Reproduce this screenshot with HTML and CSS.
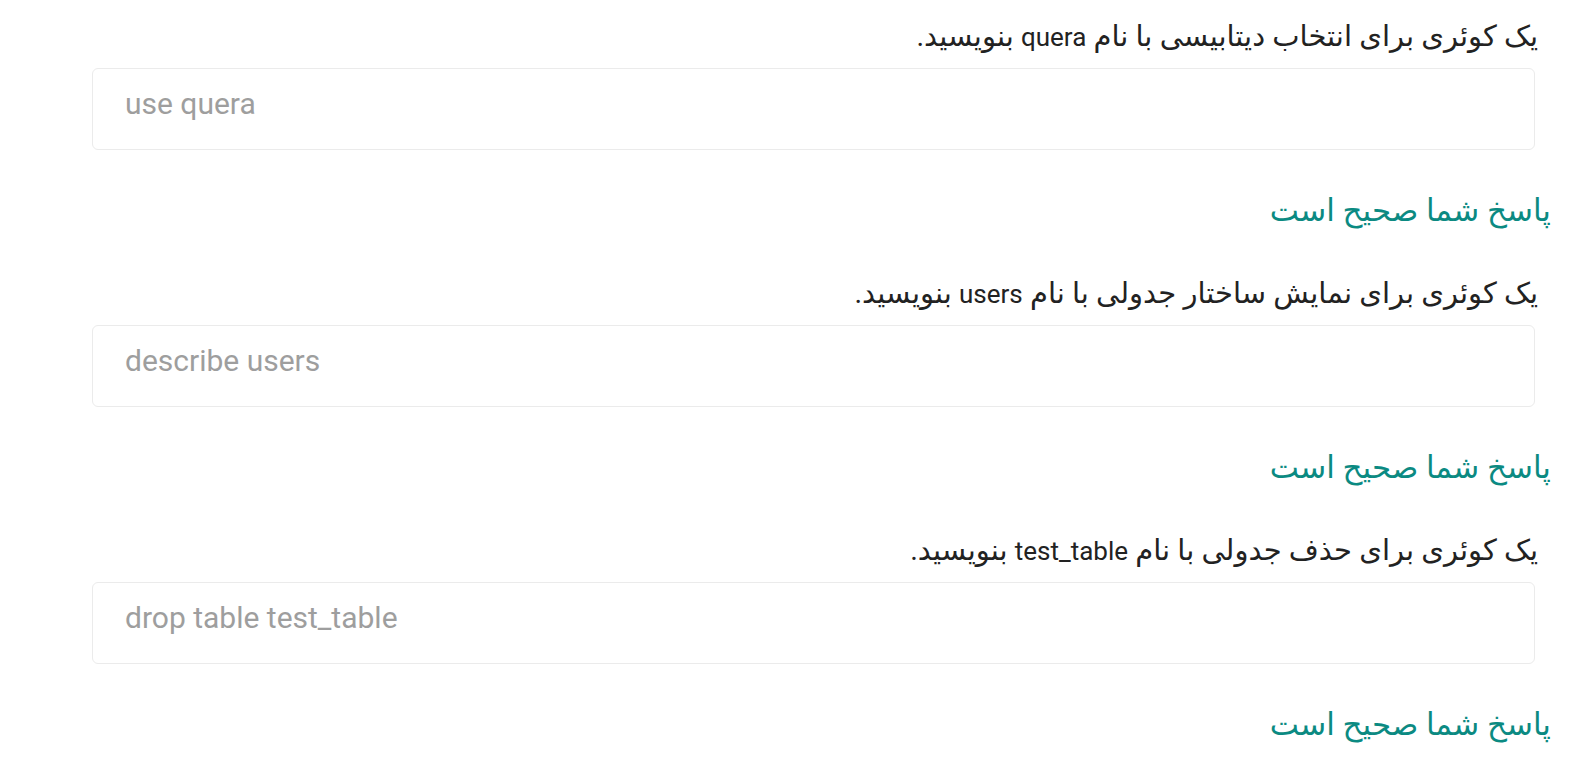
FILE: index.html
```html
<!DOCTYPE html>
<html lang="fa" dir="rtl">
<head>
<meta charset="utf-8">
<title>Quiz</title>
<link rel="stylesheet" href="styles.css">
</head>
<body>
<main class="quiz">
  <section class="item">
    <p class="question">یک کوئری برای انتخاب دیتابیسی با نام <span class="latin">quera</span> بنویسید.</p>
    <div class="field" dir="ltr"><span class="value">use quera</span></div>
    <p class="answer">پاسخ شما صحیح است</p>
  </section>
  <section class="item">
    <p class="question">یک کوئری برای نمایش ساختار جدولی با نام <span class="latin">users</span> بنویسید.</p>
    <div class="field" dir="ltr"><span class="value">describe users</span></div>
    <p class="answer">پاسخ شما صحیح است</p>
  </section>
  <section class="item">
    <p class="question">یک کوئری برای حذف جدولی با نام <span class="latin">test_table</span> بنویسید.</p>
    <div class="field" dir="ltr"><span class="value">drop table test_table</span></div>
    <p class="answer">پاسخ شما صحیح است</p>
  </section>
</main>
</body>
</html>
```
FILE: styles.css
```css
html, body {
  margin: 0;
  padding: 0;
  background: #ffffff;
}

body {
  font-family: Roboto, "DejaVu Sans", sans-serif;
  color: #222222;
}

.quiz {
  padding: 16px 40px 0 92px;
  display: flex;
  flex-direction: column;
  gap: 42px;
}

.item {
  display: flex;
  flex-direction: column;
}

.question {
  margin: 0 0 12px 0;
  height: 40px;
  font-size: 29px;
  line-height: 40px;
  color: #222222;
}

.latin {
  font-family: Roboto, sans-serif;
  font-size: 26px;
}

.field {
  height: 82px;
  margin-right: 3px;
  margin-left: 0;
  border: 1px solid #ebebeb;
  border-radius: 6px;
  display: flex;
  align-items: center;
  padding: 0 32px 11px 32px;
  box-sizing: border-box;
}

.value {
  font-family: Roboto, sans-serif;
  font-size: 30px;
  color: #9e9e9e;
}

.answer {
  margin: 41px -13px 0 0;
  height: 40px;
  font-size: 31px;
  line-height: 40px;
  color: #0b8a82;
}
```
